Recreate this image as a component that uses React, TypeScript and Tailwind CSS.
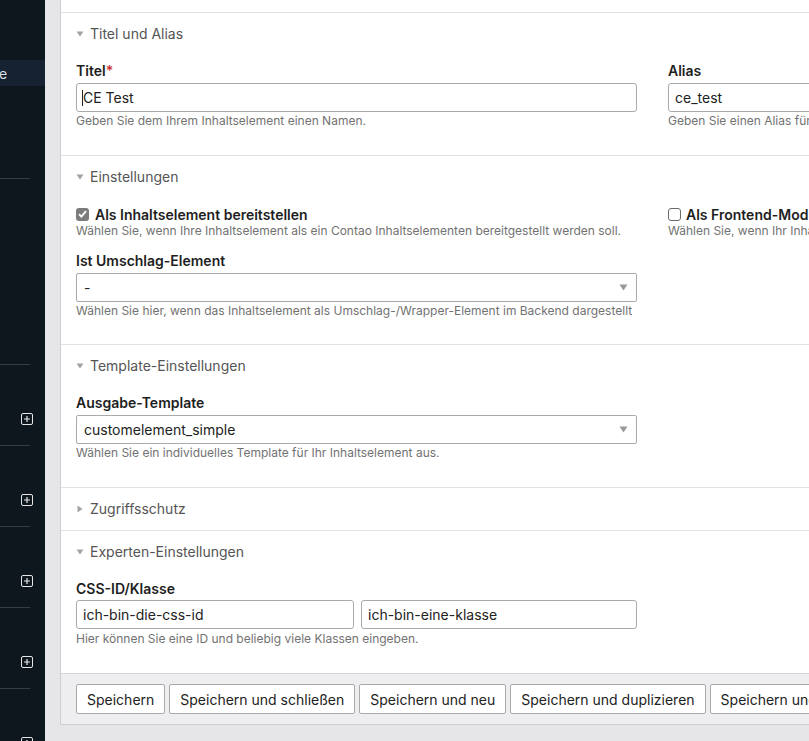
import React from "react";

const font = { fontFamily: 'Inter, "Noto Sans", Roboto, sans-serif' };

function Caret({ open }: { open: boolean }) {
  return open ? (
    <svg width="8" height="6" viewBox="0 0 8 6" className="mr-[6px] shrink-0">
      <path d="M0.5 0.5 H7.5 L4 5.5 Z" fill="#a3a3a3" />
    </svg>
  ) : (
    <svg width="8" height="8" viewBox="0 0 8 8" className="mr-[6px] shrink-0">
      <path d="M1.5 0.5 V7.5 L6.5 4 Z" fill="#a3a3a3" />
    </svg>
  );
}

function Legend({ text, open = true }: { text: string; open?: boolean }) {
  return (
    <div className="flex items-center pl-[15px] pt-[11px] h-[31px] text-[14px] leading-[20px] text-[#555]">
      <Caret open={open} />
      <span>{text}</span>
    </div>
  );
}

function Label({ text, req }: { text: string; req?: boolean }) {
  return (
    <div className="text-[14px] leading-[20px] font-semibold text-[#1e1e1e]">
      {text}
      {req && <span className="text-[#c33]">*</span>}
    </div>
  );
}

function Help({ text, mt = "mt-[1px]" }: { text: string; mt?: string }) {
  return (
    <div className={`${mt} text-[12px] leading-[16px] text-[#727272] whitespace-nowrap`}>{text}</div>
  );
}

function TextBox({ value, caret, className = "" }: { value: string; caret?: boolean; className?: string }) {
  return (
    <div
      className={`h-[29px] border border-[#aaa] rounded-[3px] bg-white flex items-center pl-[6px] text-[14px] text-[#222] ${className}`}
    >
      {caret && <span className="w-px h-[16px] bg-[#222] -ml-[1px]" />}
      <span>{value}</span>
    </div>
  );
}

function SelectBox({ value }: { value: string }) {
  return (
    <div className="h-[29px] w-[561px] border border-[#aaa] rounded-[2px] bg-white flex items-center justify-between pl-[7px] pr-[8px] text-[14px] text-[#222]">
      <span>{value}</span>
      <svg width="9" height="7" viewBox="0 0 9 7">
        <path d="M0.5 0.5 H8.5 L4.5 6.5 Z" fill="#9a9a9a" />
      </svg>
    </div>
  );
}

function Check({ checked, label }: { checked: boolean; label: string }) {
  return (
    <div className="flex items-center h-[18px] text-[14px] font-semibold text-[#1e1e1e]">
      {checked ? (
        <span className="w-[13px] h-[13px] rounded-[3px] bg-[#7c7c7c] flex items-center justify-center mr-[6px]">
          <svg width="9" height="8" viewBox="0 0 9 8">
            <path d="M1 4.2 L3.4 6.6 L8 1.2" stroke="#fff" strokeWidth="1.8" fill="none" />
          </svg>
        </span>
      ) : (
        <span className="w-[13px] h-[13px] rounded-[3px] border border-[#6a6a6a] bg-white mr-[5px]" />
      )}
      <span className="whitespace-nowrap">{label}</span>
    </div>
  );
}

function Button({ text }: { text: string }) {
  return (
    <div className="h-[30px] px-[10px] border border-[#aaa] rounded-[2px] bg-white flex items-center text-[14px] text-[#222] whitespace-nowrap shrink-0">
      {text}
    </div>
  );
}

function PlusSquare() {
  return (
    <svg width="12" height="12" viewBox="0 0 12 12">
      <rect x="0.5" y="0.5" width="11" height="11" rx="1.5" fill="none" stroke="#e6e6e6" />
      <path d="M6 3 V9 M3 6 H9" stroke="#e6e6e6" strokeWidth="1.2" />
    </svg>
  );
}

function Sidebar() {
  const groups = [0, 1, 2, 3, 4];
  return (
    <div className="w-[45px] shrink-0 bg-[#0e161e] flex flex-col overflow-hidden">
      <div className="h-[60px] shrink-0" />
      <div className="h-[26px] shrink-0 bg-[#162231] flex items-center text-[14px] text-[#d6dee6] -ml-[1px]">e</div>
      <div className="h-[92px] shrink-0" />
      <div className="h-px w-[30px] shrink-0 bg-[#343c45]" />
      <div className="h-[185px] shrink-0" />
      {groups.map((g) => (
        <div key={g} className="flex flex-col shrink-0">
          <div className="h-px w-[30px] bg-[#343c45]" />
          <div className="h-[48px]" />
          <div className="pl-[21px] h-[12px]">
            <PlusSquare />
          </div>
          <div className="h-[20px]" />
        </div>
      ))}
    </div>
  );
}

export default function App() {
  return (
    <div className="w-[809px] h-[741px] overflow-hidden flex bg-[#e6e6e9]" style={font}>
      <Sidebar />
      <div className="pl-[15px] flex-1 overflow-hidden">
        <div className="w-[1200px] bg-white border-l border-b border-[#cfcfd2]">
          <div className="h-[12px]" />

          {/* Titel und Alias */}
          <div className="border-t border-[#e3e3e3] pb-[26px]">
            <Legend text="Titel und Alias" />
            <div className="flex gap-[31px] pl-[15px] mt-[17px]">
              <div className="w-[561px]">
                <Label text="Titel" req />
                <TextBox value="CE Test" caret className="mt-[2px] border-[#9c9c9c]" />
                <Help text="Geben Sie dem Ihrem Inhaltselement einen Namen." />
              </div>
              <div className="w-[561px]">
                <Label text="Alias" />
                <TextBox value="ce_test" className="mt-[2px]" />
                <Help text="Geben Sie einen Alias für dieses Inhaltselement ein." />
              </div>
            </div>
          </div>

          {/* Einstellungen */}
          <div className="border-t border-[#e3e3e3] pb-[25px]">
            <Legend text="Einstellungen" />
            <div className="flex gap-[31px] pl-[15px] mt-[18px]">
              <div className="w-[561px]">
                <Check checked label="Als Inhaltselement bereitstellen" />
                <Help
                  mt="mt-0"
                  text="Wählen Sie, wenn Ihre Inhaltselement als ein Contao Inhaltselementen bereitgestellt werden soll."
                />
              </div>
              <div className="w-[561px]">
                <Check checked={false} label="Als Frontend-Modul bereitstellen" />
                <Help mt="mt-0" text="Wählen Sie, wenn Ihr Inhaltselement als ein Frontend-Modul bereitgestellt werden soll." />
              </div>
            </div>
            <div className="pl-[15px] mt-[12px]">
              <Label text="Ist Umschlag-Element" />
              <div className="mt-[2px]">
                <SelectBox value="-" />
              </div>
              <Help
                mt="mt-[1px]"
                text="Wählen Sie hier, wenn das Inhaltselement als Umschlag-/Wrapper-Element im Backend dargestellt"
              />
            </div>
          </div>

          {/* Template-Einstellungen */}
          <div className="border-t border-[#e3e3e3] pb-[26px]">
            <Legend text="Template-Einstellungen" />
            <div className="pl-[15px] mt-[17px]">
              <Label text="Ausgabe-Template" />
              <div className="mt-[2px]">
                <SelectBox value="customelement_simple" />
              </div>
              <Help mt="mt-[1px]" text="Wählen Sie ein individuelles Template für Ihr Inhaltselement aus." />
            </div>
          </div>

          {/* Zugriffsschutz */}
          <div className="border-t border-[#e3e3e3] pb-[11px]">
            <Legend text="Zugriffsschutz" open={false} />
          </div>

          {/* Experten-Einstellungen */}
          <div className="border-t border-[#e3e3e3] pb-[26px]">
            <Legend text="Experten-Einstellungen" />
            <div className="pl-[15px] mt-[17px]">
              <Label text="CSS-ID/Klasse" />
              <div className="flex gap-[7px] mt-[1px] w-[561px]">
                <TextBox value="ich-bin-die-css-id" className="w-[278px]" />
                <TextBox value="ich-bin-eine-klasse" className="w-[276px]" />
              </div>
              <Help mt="mt-[2px]" text="Hier können Sie eine ID und beliebig viele Klassen eingeben." />
            </div>
          </div>

          {/* Aktionen */}
          <div className="border-t border-[#d6d6d8] bg-[#eeeef0] py-[10px] pl-[15px] flex gap-[4px]">
            <Button text="Speichern" />
            <Button text="Speichern und schließen" />
            <Button text="Speichern und neu" />
            <Button text="Speichern und duplizieren" />
            <Button text="Speichern und zurück" />
          </div>
        </div>
      </div>
    </div>
  );
}
